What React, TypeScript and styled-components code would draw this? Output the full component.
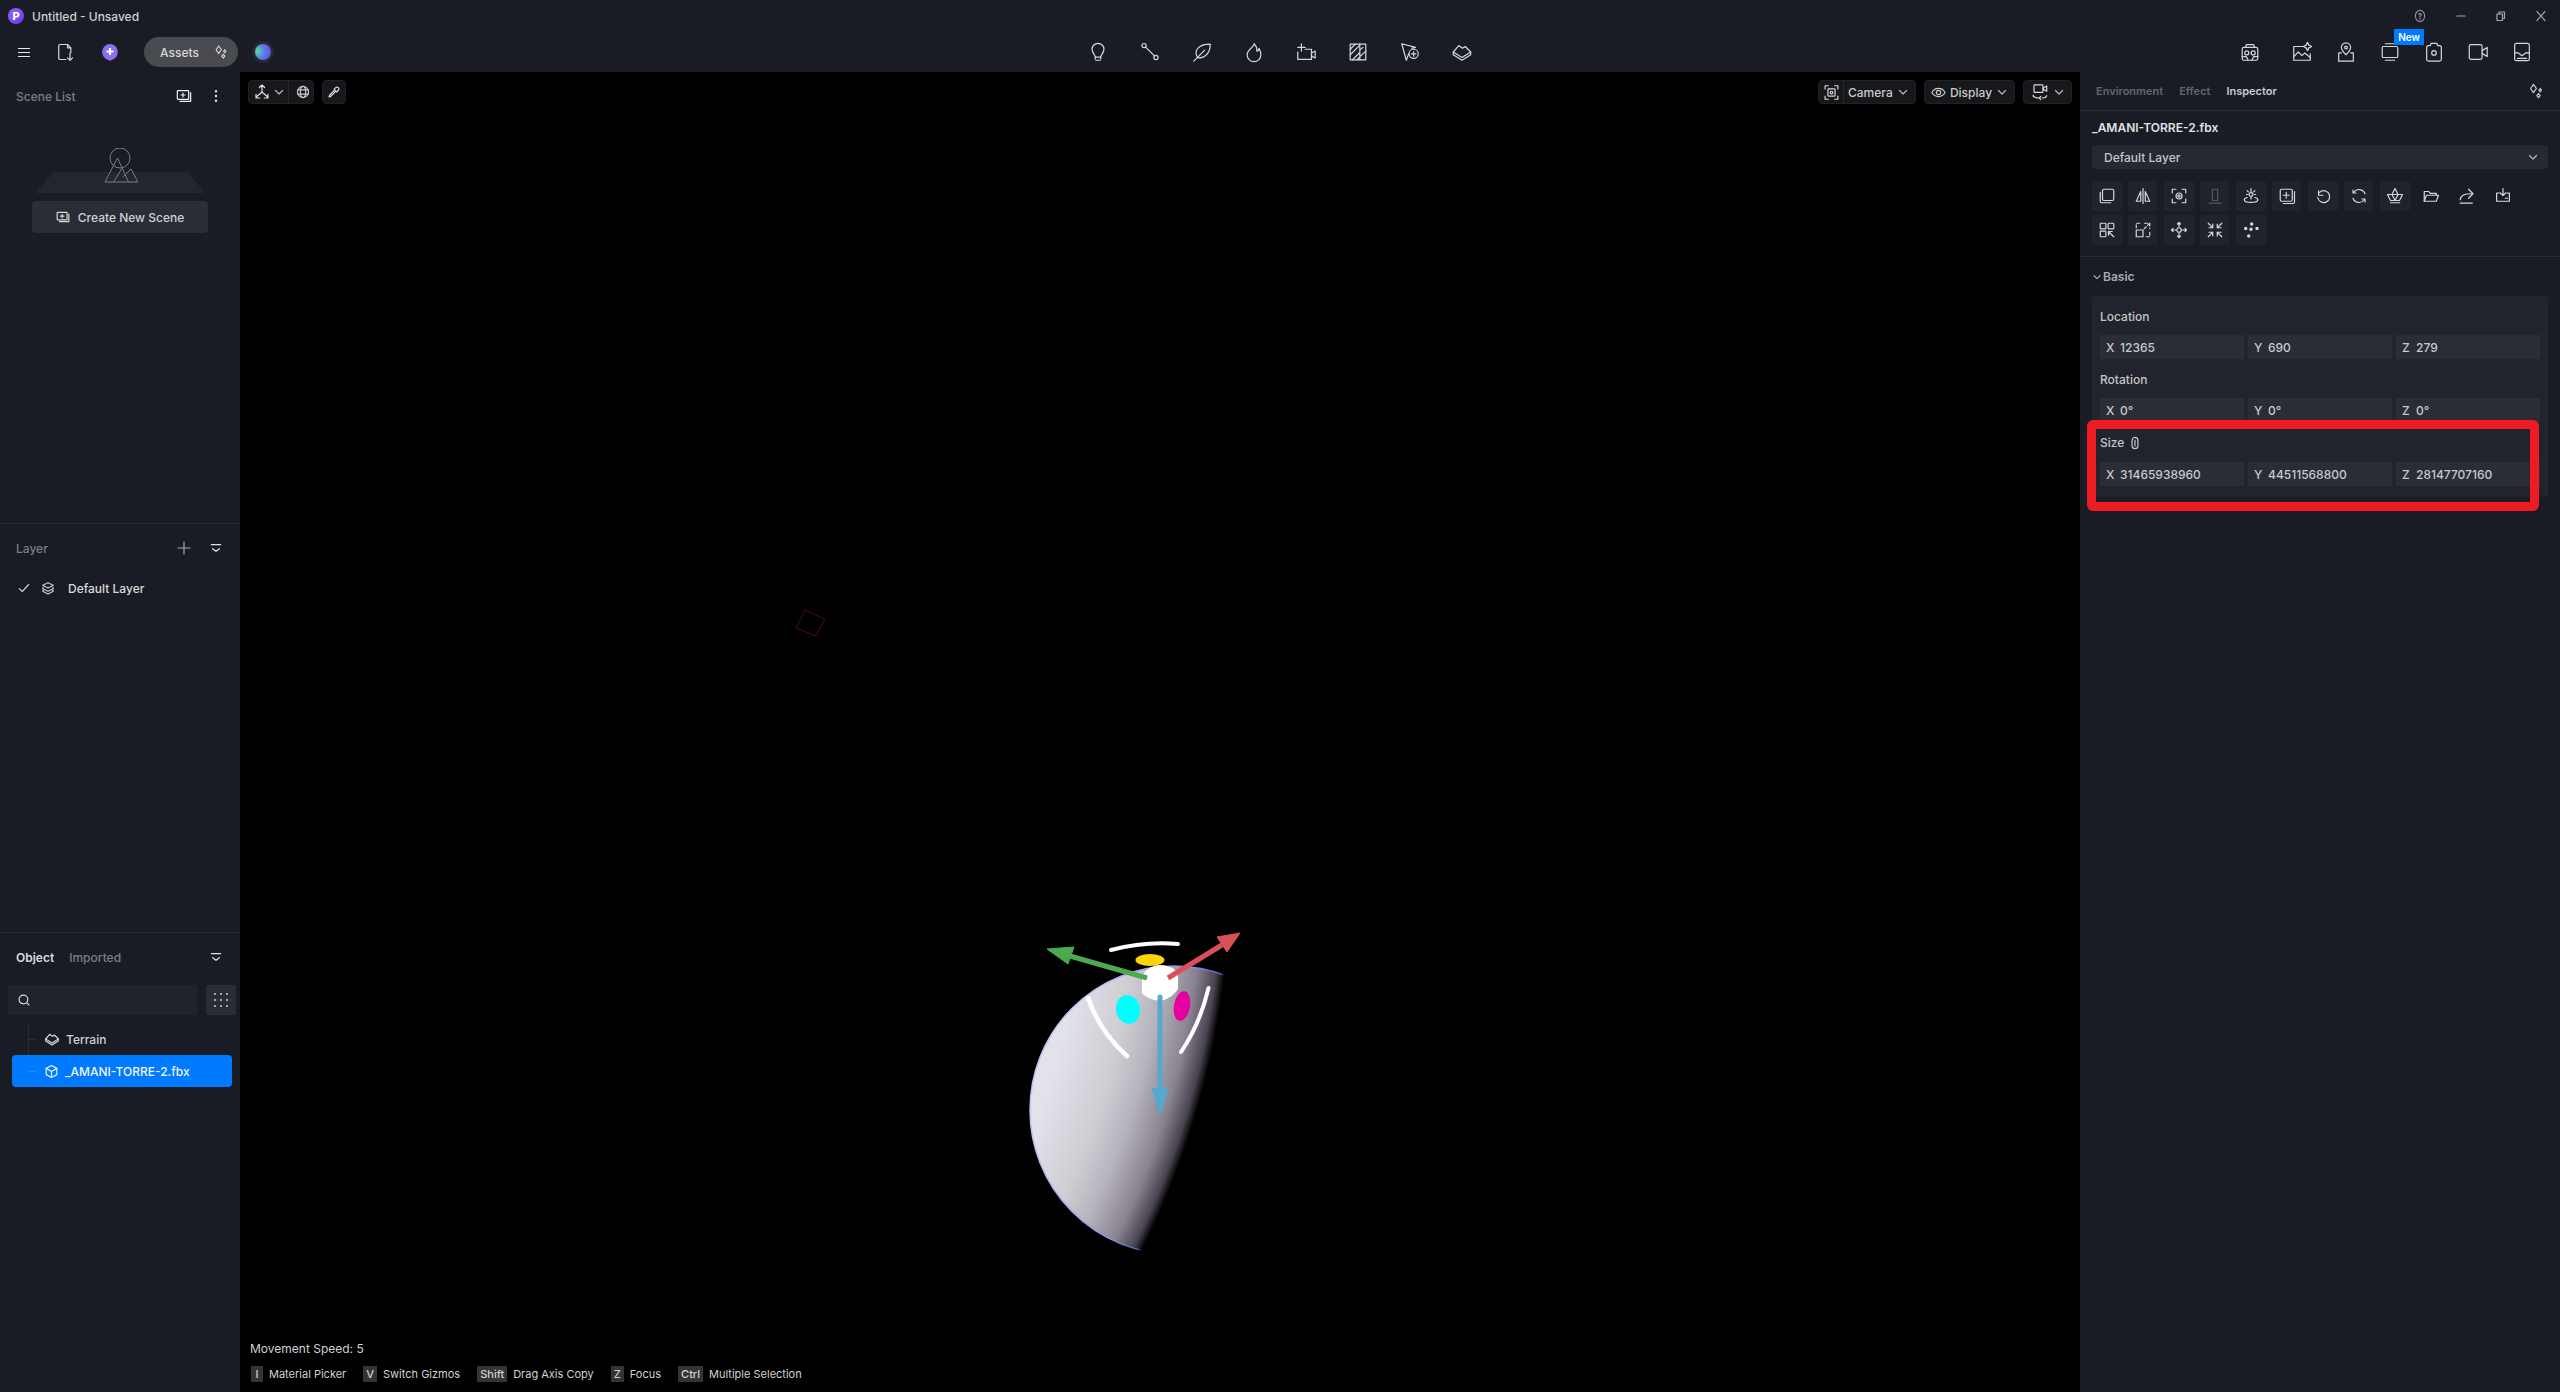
import React from 'react'
import styled, { createGlobalStyle } from 'styled-components'

const GlobalStyle = createGlobalStyle`
  html, body { margin: 0; padding: 0; background: #000; }
  body { font-family: Inter, "Liberation Sans", sans-serif; font-size: 12px; overflow: hidden; }
  * { box-sizing: border-box; }
`

const icons: Record<string, React.ReactNode> = {
  fileImport: <><path d="M15 3H6a1.500 1.500 0 0 0-1.500 1.500v15A1.500 1.500 0 0 0 6 21h7" /><path d="M15 3v4h4l-4-4M19 7v6" /><path d="M18 13v9M15 19l3 3 3-3" /></>,
  sparkles: <><path d="M9 4l3.500 5L9 14 5.500 9z" /><path d="M17 9l1.500 2-1.500 2-1.500-2zM15 15l2 2.500-2 2.500-2-2.500z" /></>,
  addScene: <><rect x="2" y="4" width="17" height="13" rx="1" /><path d="M10.500 7.500v6M7.500 10.500h6M22 7v13H6" /></>,
  dots: <><circle cx="12" cy="5" r="1" fill="currentColor" /><circle cx="12" cy="12" r="1" fill="currentColor" /><circle cx="12" cy="19" r="1" fill="currentColor" /></>,
  plus: <path d="M12 3v18M3 12h18" />,
  collapse: <><path d="M5 7h14" /><path d="M7 13l5 4 5-4" /></>,
  check: <path d="M4 13l5 5L20 6" />,
  layers: <><path d="M12 4l8 4-8 4-8-4z" /><path d="M5 11l-1 2 8 4 8-4-1-2" /><path d="M5 15l-1 2 8 4 8-4-1-2" /></>,
  search: <><circle cx="11" cy="11" r="7.500" /><path d="M17 17l3.500 3.500" /></>,
  terrain: <><path d="M2.500 12l6-7 4 3 3-2 6 6-9.500 6z" /><path d="M2.500 12v3l9.500 6 9.500-6v-3" /></>,
  cube: <><path d="M12 2.500l8.500 4.500v10L12 21.500 3.500 17V7z" /><path d="M3.500 7l8.500 5 8.500-5M12 12v9.500" /></>,
  bulb: <><path d="M9 17.500c0-2.500-3.500-4.500-3.500-8.500a6.500 6.500 0 0 1 13 0c0 4-3.500 6-3.500 8.500z" /><path d="M9.500 21h5M9 17.500v2M15 17.500v2" /></>,
  node: <><circle cx="5.500" cy="5" r="2.300" /><circle cx="18.500" cy="18" r="2.300" /><path d="M7.200 6.700l9.600 9.600" /></>,
  leaf: <><path d="M21 3.500c-9 0-15.500 3.500-15.500 10 0 2 1 3.500 2.500 5 7 0 13-5 13-15z" /><path d="M3 22L15 10" /></>,
  flame: <path d="M12 3c1 3-7.500 6-7.500 12a7.500 7.500 0 0 0 15 0c0-3-1-5-2-7-.5 2-1.500 3-2.500 3 .5-3-1-6-3-8z" />,
  videoPlus: <><path d="M11 9h7v11H3v-8" /><path d="M7 3v8M3 7h8" /><path d="M18 13l4-2v7.500l-4-2z" /></>,
  hatch: <><rect x="3.500" y="3.500" width="17" height="17" /><path d="M14 3.500v17M3.500 9L9 3.500M3.500 15L14 4.500M6 20.500l8-8M11 20.500l3-3M14 10l3.500-3M14 17l6.500-6" /></>,
  cursorPlus: <><path d="M3 3l15 4-4 1M3 3l5 18 2.500-7" /><circle cx="16" cy="14" r="5" /><path d="M16 11.500v5M13.500 14h5" /></>,
  help: <><ellipse cx="12" cy="12" rx="8" ry="9.500" /><path d="M10 9.500a2 2 0 1 1 3 2c-1 .6-1 1-1 2.500M12 16.500v1" /></>,
  minimize: <path d="M5 12h14" />,
  restore: <><rect x="4" y="8" width="11" height="13" /><path d="M8 8V4h11v13h-4" /></>,
  close: <path d="M5 4l14 16M19 4L5 20" />,
  vr: <><path d="M7 7l1-3h8l1 3" /><rect x="3.500" y="7" width="17" height="14" rx="2" /><circle cx="8.500" cy="13" r="2.200" /><circle cx="15.500" cy="13" r="2.200" /><path d="M3.500 17H8l2 4M20.500 17H16l-2 4" /></>,
  imageSpark: <><path d="M13 6H3v15h18v-7" /><path d="M3 17l5-5 4 4 3-3 6 5" /><path d="M18 1.500l1.500 3 3 1.500-3 1.500-1.500 3-1.500-3-3-1.500 3-1.500z" /></>,
  pinBox: <><path d="M12 15c-3-3-5-5-5-8a5 5 0 0 1 10 0c0 3-2 5-5 8z" /><circle cx="12" cy="7" r="1.500" /><path d="M7 13H4v9h16v-9h-3" /></>,
  monitor: <><rect x="3.500" y="6" width="17" height="12" rx="1.500" /><path d="M7 3h10M7 21h10" /></>,
  camera: <><path d="M8 5l1-2.500h6L16 5h2a2 2 0 0 1 2 2v13a2 2 0 0 1-2 2H6a2 2 0 0 1-2-2V7a2 2 0 0 1 2-2z" /><circle cx="12" cy="13" r="2.500" /></>,
  video: <><rect x="2.500" y="4" width="14" height="16" rx="2" /><path d="M16.500 10.500L22 7v10l-5.500-3.500" /></>,
  tray: <><rect x="4" y="2.500" width="16" height="19" rx="2" /><path d="M4 13h4l4 3 4-3h4M7 19h10" /></>,
  axes: <><path d="M12 12V3M8.500 6L12 2.500 15.500 6M12 12l-8 7M12 12l8 7M4 15v5h5M20 15v5h-5" /></>,
  globe: <><circle cx="12" cy="12" r="9.500" /><ellipse cx="12" cy="12" rx="4.500" ry="9.500" /><path d="M3 8.500h18M3 15.500h18" /></>,
  picker: <><path d="M15 4.500a3 3 0 0 1 4.500 4.500l-3 3-4.500-4.500z" /><path d="M13 9l-8.500 8.500-1 3 3-1L15 11" /></>,
  focus: <><path d="M3 7V2.500h4.500M16.500 2.500H21V7M21 17v4.500h-4.500M7.500 21.500H3V17" /><rect x="7" y="7" width="10" height="10" rx="1" /><circle cx="12" cy="12" r="1.800" /></>,
  focusRing: <><path d="M3 8V3h5M16 3h5v5M21 16v5h-5M8 21H3v-5" /><circle cx="12" cy="12" r="4" /><circle cx="12" cy="12" r="1.500" /></>,
  eye: <><path d="M1.500 12C4 7.500 8 5.500 12 5.500s8 2 10.500 6.500c-2.500 4.500-6.500 6.500-10.500 6.500S4 16.500 1.500 12z" /><circle cx="12" cy="12" r="3.500" /></>,
  orbit: <><rect x="4" y="2.500" width="12" height="10" rx="1" /><path d="M16 7l5-3v7l-5-3zM3 17c1 2 4 3 8 3M21 17c-1 2-3 3-6 3M13 18l-2 2 2 2M3 16l0 2" /></>,
  copy: <><rect x="6" y="3" width="15" height="15" rx="2" /><path d="M3 7v12a2 2 0 0 0 2 2h12" /></>,
  mirror: <><path d="M12 2v20M9 6L3 19h6zM15 6l6 13h-6z" /></>,
  pedestal: <><rect x="8.500" y="3" width="7" height="15" /><path d="M4 21.500h16" /></>,
  anchor: <><circle cx="12" cy="10" r="2.500" /><path d="M12 2v5.500M12 12.500V16M6 10h2M16 10h2M7 5l1.500 1.500M17 5l-1.500 1.500" /><path d="M7 14c-2.500.5-4 1.500-4 3 0 2 4 3.500 9 3.500s9-1.500 9-3.500c0-1.500-1.500-2.500-4-3" /></>,
  addCopy: <><rect x="3" y="3" width="16" height="16" rx="2" /><path d="M11 7v8M7 11h8M22 6v14a2 2 0 0 1-2 2H7" /></>,
  undo: <><path d="M6 5v6h6" /><path d="M6.500 8a8 8 0 1 1-1.500 6" /></>,
  sync: <><path d="M20 9a8.500 8.500 0 0 0-15-2M4 4v4h4M4 15a8.500 8.500 0 0 0 15 2M20 20v-4h-4" /></>,
  crystal: <><path d="M12 2l4 8h6l-4 8H6L2 10h6zM8 10h8M8 10l4 8 4-8M6 21h12" /></>,
  folder: <><path d="M3 19V6h6l2 2.500h8V11" /><path d="M3 19l3-8h16l-3 8z" /></>,
  share: <><path d="M3 17c1-6 5-8 16-8" /><path d="M14 3l6 6-6 6M3 21.500h16" /></>,
  download: <><path d="M12 2v9M8.500 8l3.500 3.500L15.500 8M7 8H3.500v11h17V8H17" /><path d="M15 15h3" /></>,
  qrArrow: <><rect x="3" y="3" width="7.500" height="7.500" rx="1" /><rect x="13.500" y="3" width="7.500" height="7.500" rx="1" /><rect x="3" y="13.500" width="7.500" height="7.500" rx="1" /><path d="M14 14l7 7M14 14v5M14 14h5" /></>,
  resize: <><rect x="3" y="12" width="9" height="9" /><path d="M14 3h7v7M21 3l-8 8M3 9V3h6M21 15v6h-5" strokeDasharray="3 2" /></>,
  move: <><circle cx="12" cy="12" r="3" /><path d="M12 2v6M12 16v6M2 12h6M16 12h6M10 4l2-2 2 2M10 20l2 2 2-2M4 10l-2 2 2 2M20 10l2 2-2 2" /></>,
  shrink: <><path d="M3 3l6 6M9 4v5H4M21 3l-6 6M15 4v5h5M3 21l6-6M9 20v-5H4M21 21l-6-6M15 20v-5h5" /></>,
  scatter: <><circle cx="5" cy="10" r="1.500" fill="currentColor" /><circle cx="13" cy="4" r="1.500" fill="currentColor" /><circle cx="12" cy="11" r="1.500" fill="currentColor" /><circle cx="20" cy="10" r="1.500" fill="currentColor" /><circle cx="9" cy="20" r="1.500" fill="currentColor" /></>,
  link: <><rect x="7" y="2.500" width="10" height="19" rx="5" /><path d="M12 7v10" /></>,
  chevron: <path d="M5 9l7 7 7-7" />,
}

const Svg = styled.svg<{ $c?: string }>`
  display: block;
  flex: none;
  fill: none;
  stroke: currentColor;
  stroke-width: 1.2;
  stroke-linecap: round;
  stroke-linejoin: round;
  color: ${p => p.$c || '#d9dadc'};
  & * { vector-effect: non-scaling-stroke; }
`

const Icon: React.FC<{ name: string; size?: number; color?: string }> = ({ name, size = 18, color }) => (
  <Svg viewBox="0 0 24 24" width={size} height={size} $c={color}>{icons[name]}</Svg>
)

const Page = styled.div`
  width: 2560px;
  height: 1392px;
  display: flex;
  flex-direction: column;
  background: #1a1c25;
  color: #d8d9db;
`

const TopBar = styled.header`
  height: 72px;
  flex: none;
  display: flex;
  flex-direction: column;
`

const TitleRow = styled.div`
  height: 32px;
  display: flex;
  align-items: center;
  padding-left: 8px;
  gap: 8px;
  color: #cfd0d3;
  font-weight: 500;
`

const WindowControls = styled.div`
  margin-left: auto;
  margin-right: 12px;
  display: flex;
  align-items: center;
  gap: 27px;
`

const ToolRow = styled.div`
  height: 40px;
  position: relative;
  display: grid;
  grid-template-columns: 1fr auto 1fr;
  align-items: center;
`

const ToolGroup = styled.div<{ $end?: boolean; $gap: number; $pad?: number }>`
  display: flex;
  align-items: center;
  gap: ${p => p.$gap}px;
  justify-content: ${p => (p.$end ? 'flex-end' : 'flex-start')};
  padding: 0 ${p => p.$pad ?? 0}px;
`

const MenuLines = styled.span`
  width: 12px;
  height: 9px;
  margin: 0 0 0 18px;
  border-top: 1px solid #e4e4e6;
  border-bottom: 1px solid #e4e4e6;
  position: relative;
  &::after {
    content: '';
    position: absolute;
    left: 0;
    right: 0;
    top: 3px;
    border-top: 1px solid #e4e4e6;
  }
`

const FileButton = styled.span`
  margin-left: 25px;
`

const BubbleSvg = styled.svg`
  margin-left: 26px;
`

const AssetsPill = styled.div`
  width: 94px;
  height: 30px;
  margin-left: 25px;
  border-radius: 15px;
  background: #494b51;
  display: flex;
  align-items: center;
  justify-content: space-between;
  padding: 0 8px 0 16px;
  font-weight: 500;
  color: #d6d7d8;
`

const OrbRing = styled.span`
  width: 22px;
  height: 22px;
  margin-left: 14px;
  border-radius: 50%;
  background: #262833;
  display: grid;
  place-items: center;
`

const Orb = styled.span`
  width: 16px;
  height: 16px;
  border-radius: 50%;
  background: radial-gradient(circle at 15% 45%, #58e0a0 0, #5c7ce8 45%, #6d3fe8 100%);
`

const RightTool = styled.span<{ $wide?: boolean }>`
  position: relative;
  margin-right: ${p => (p.$wide ? 8 : 0)}px;
`

const NewBadge = styled.span`
  position: absolute;
  left: 15px;
  top: -12px;
  width: 30px;
  height: 16px;
  background: #007aff;
  color: #fff;
  font-size: 10px;
  font-weight: 600;
  line-height: 16px;
  text-align: center;
`

const Main = styled.div`
  flex: 1;
  display: flex;
  min-height: 0;
`

const LeftPanel = styled.aside`
  width: 240px;
  flex: none;
  display: flex;
  flex-direction: column;
`

const Section = styled.section<{ $h?: number }>`
  height: ${p => (p.$h ? `${p.$h}px` : 'auto')};
  flex: ${p => (p.$h ? 'none' : 1)};
  border-bottom: ${p => (p.$h ? '1px solid #2b2d35' : 'none')};
  display: flex;
  flex-direction: column;
`

const SectionHead = styled.div`
  height: 48px;
  flex: none;
  display: flex;
  align-items: center;
  padding: 0 16px;
  gap: 16px;
  color: #7c7e84;
  font-weight: 500;
`

const HeadTitle = styled.span<{ $on?: boolean }>`
  color: ${p => (p.$on ? '#d8d9db' : '#7c7e84')};
  font-weight: ${p => (p.$on ? 600 : 500)};
`

const HeadTabs = styled.div`
  display: flex;
  gap: 15px;
  margin-right: auto;
`

const HeadIcons = styled.div`
  margin-left: auto;
  display: flex;
  align-items: center;
  gap: 16px;
`

const EmptyArt = styled.div`
  position: relative;
  height: 45px;
  margin-top: 28px;
  display: flex;
  justify-content: center;
`

const Plinth = styled.div`
  position: absolute;
  left: 35px;
  top: 24px;
  width: 170px;
  height: 21px;
  background: #24262e;
  clip-path: polygon(11% 0, 90% 0, 100% 100%, 0 100%);
`

const EmptySvg = styled.svg`
  position: relative;
  fill: none;
  stroke: #7a7c82;
  stroke-width: 1;
`

const CreateButton = styled.button`
  width: 176px;
  height: 32px;
  margin: 8px 0 0 32px;
  padding: 0;
  border: 0;
  border-radius: 4px;
  background: #2a2d35;
  color: #cfd0d3;
  font: 500 12px Inter, sans-serif;
  display: flex;
  align-items: center;
  justify-content: center;
  gap: 8px;
`

const LayerRow = styled.div`
  height: 32px;
  padding-left: 17px;
  display: flex;
  align-items: center;
  font-weight: 500;
  color: #d8d9db;
`

const LayerName = styled.span`
  margin-left: 12px;
`

const LayerIcon = styled.span`
  margin-left: 9px;
`

const SearchRow = styled.div`
  display: flex;
  gap: 8px;
  padding: 4px 4px 0 8px;
`

const SearchBox = styled.div`
  width: 190px;
  height: 30px;
  background: #20232b;
  border-radius: 2px;
  display: flex;
  align-items: center;
  padding-left: 9px;
`

const GridButton = styled.div`
  width: 30px;
  height: 30px;
  border-radius: 2px;
  background: #292c33;
  display: grid;
  grid-template-columns: repeat(3, 2px);
  grid-auto-rows: 2px;
  gap: 4px;
  place-content: center;
  span { background: #c9cacd; border-radius: 50%; }
`

const Tree = styled.div`
  margin-top: 8px;
  padding: 0 8px 0 12px;
  position: relative;
  &::before {
    content: '';
    position: absolute;
    left: 28px;
    top: 0;
    height: 64px;
    border-left: 1px solid #2b2d35;
  }
`

const TreeRow = styled.div<{ $sel?: boolean }>`
  height: 32px;
  border-radius: 4px;
  position: relative;
  display: flex;
  align-items: center;
  gap: 6px;
  padding-left: 32px;
  font-weight: 500;
  background: ${p => (p.$sel ? '#007aff' : 'transparent')};
  color: ${p => (p.$sel ? '#f2f5fa' : '#d0d1d3')};
  &::before {
    content: '';
    position: absolute;
    left: 17px;
    width: 6px;
    border-top: 1px solid ${p => (p.$sel ? '#2a8fff' : '#2b2d35')};
  }
`

const Viewport = styled.main`
  flex: 1;
  position: relative;
  background: #000;
  display: flex;
  flex-direction: column;
  padding: 8px;
  overflow: hidden;
`

const ViewBar = styled.div`
  display: flex;
  gap: 8px;
  position: relative;
`

const ViewTool = styled.div<{ $w: number; $push?: boolean }>`
  width: ${p => p.$w}px;
  height: 24px;
  margin-left: ${p => (p.$push ? 'auto' : 0)};
  background: #17181c;
  border: 1px solid #202227;
  border-radius: 4px;
  display: flex;
  align-items: center;
  color: #c9cacd;
  font-weight: 500;
  gap: 4px;
`

const ViewCell = styled.span<{ $w?: number; $line?: boolean; $gap?: number; $start?: boolean }>`
  width: ${p => (p.$w ? `${p.$w}px` : 'auto')};
  height: 100%;
  display: flex;
  align-items: center;
  justify-content: ${p => (p.$start ? 'flex-start' : 'center')};
  gap: ${p => p.$gap ?? 4}px;
  border-right: ${p => (p.$line ? '1px solid #26282d' : 'none')};
`

const Gizmo = styled.svg`
  position: absolute;
  left: 750px;
  top: 838px;
`

const Marker = styled.svg`
  position: absolute;
  left: 550px;
  top: 530px;
`

const Hints = styled.div`
  margin-top: auto;
  margin-left: 2px;
  position: relative;
  padding-bottom: 2px;
  color: #d0d1d3;
`

const SpeedLine = styled.div`
  font-size: 12px;
  line-height: 16px;
  margin-bottom: 9px;
`

const KeyRow = styled.div`
  display: flex;
  align-items: center;
  gap: 17px;
  padding-left: 1px;
  font-size: 11px;
`

const KeyHint = styled.span`
  display: flex;
  align-items: center;
  gap: 6px;
`

const Key = styled.kbd`
  min-width: 12px;
  height: 16px;
  padding: 0 3px;
  background: #333436;
  font: 500 11px/16px Inter, sans-serif;
  text-align: center;
`

const RightPanel = styled.aside`
  width: 480px;
  flex: none;
  position: relative;
  display: flex;
  flex-direction: column;
`

const TabRow = styled.div`
  height: 39px;
  flex: none;
  border-bottom: 1px solid #2b2d35;
  display: flex;
  align-items: center;
  gap: 16px;
  padding: 0 14px 0 16px;
  font-size: 11px;
  font-weight: 600;
`

const Tab = styled.span<{ $on?: boolean }>`
  color: ${p => (p.$on ? '#c9cacd' : '#63656c')};
`

const TabSpark = styled.span`
  margin-left: auto;
`

const ObjectBlock = styled.div`
  padding: 9px 12px 12px;
  height: 146px;
  flex: none;
  border-bottom: 1px solid #2b2d35;
`

const FileName = styled.div`
  line-height: 16px;
  font-weight: 600;
  color: #e0e1e3;
`

const SelectBox = styled.div`
  height: 24px;
  margin-top: 9px;
  border-radius: 4px;
  background: #262932;
  display: flex;
  align-items: center;
  justify-content: space-between;
  padding: 0 9px 0 12px;
  font-weight: 500;
  color: #c4c5c9;
`

const ToolGrid = styled.div`
  margin-top: 12px;
  display: grid;
  grid-template-columns: repeat(12, 30px);
  grid-auto-rows: 30px;
  column-gap: 6px;
  row-gap: 4px;
`

const ToolCell = styled.div<{ $bare?: boolean }>`
  border-radius: 2px;
  background: ${p => (p.$bare ? 'transparent' : '#20232b')};
  display: grid;
  place-items: center;
`

const BasicBlock = styled.div`
  padding: 0 12px;
`

const BasicHead = styled.div`
  height: 39px;
  display: flex;
  align-items: center;
  gap: 1px;
  font-weight: 600;
  color: #a9aaae;
`

const Card = styled.div`
  height: 201px;
  border-radius: 4px;
  background: #21242c;
  padding: 0 8px;
`

const FieldLabel = styled.div<{ $tall?: boolean }>`
  height: ${p => (p.$tall ? 40 : 39)}px;
  padding-top: 1px;
  display: flex;
  align-items: center;
  gap: 4px;
  font-weight: 500;
  color: #c4c5c9;
`

const FieldRow = styled.div`
  display: grid;
  grid-template-columns: repeat(3, 144px);
  gap: 4px;
`

const Field = styled.div`
  height: 24px;
  background: #2a2d35;
  display: flex;
  align-items: center;
  padding-left: 6px;
  gap: 6px;
  font-weight: 500;
  color: #c8c9cc;
  b { font-weight: 500; width: 8px; }
`

const RedBox = styled.div`
  position: absolute;
  left: 7px;
  top: 348px;
  width: 452px;
  height: 91px;
  border: 9px solid #ed1c24;
  border-radius: 6px;
  pointer-events: none;
`

const center = ['bulb', 'node', 'leaf', 'flame', 'videoPlus', 'hatch', 'cursorPlus', 'terrain']
const rightTools = ['vr', 'imageSpark', 'pinBox', 'monitor', 'camera', 'video', 'tray']
const inspectorTools = ['copy', 'mirror', 'focusRing', 'pedestal', 'anchor', 'addCopy', 'undo', 'sync', 'crystal', 'folder', 'share', 'download', 'qrArrow', 'resize', 'move', 'shrink', 'scatter']
const bareTools = ['folder', 'share', 'download']

const fields = [
  { label: 'Location', x: '12365', y: '690', z: '279' },
  { label: 'Rotation', x: '0°', y: '0°', z: '0°' },
  { label: 'Size', x: '31465938960', y: '44511568800', z: '28147707160', linked: true },
]

const hints = [
  ['I', 'Material Picker'],
  ['V', 'Switch Gizmos'],
  ['Shift', 'Drag Axis Copy'],
  ['Z', 'Focus'],
  ['Ctrl', 'Multiple Selection'],
]

const App: React.FC = () => (
  <Page>
    <GlobalStyle />
    <TopBar>
      <TitleRow>
        <svg width="16" height="16" viewBox="0 0 16 16">
          <defs>
            <linearGradient id="logo" x1="0" y1="0" x2="1" y2="1">
              <stop offset="0" stopColor="#8f6cf5" />
              <stop offset="1" stopColor="#6a35e8" />
            </linearGradient>
          </defs>
          <circle cx="8" cy="8" r="8" fill="url(#logo)" />
          <text x="8" y="12" textAnchor="middle" fontSize="11" fontWeight="800" fontFamily="Inter" fill="#fff">P</text>
        </svg>
        Untitled - Unsaved
        <WindowControls>
          <Icon name="help" size={14} color="#8c8e93" />
          <Icon name="minimize" size={14} color="#a5a6aa" />
          <Icon name="restore" size={12} color="#a5a6aa" />
          <Icon name="close" size={14} color="#a5a6aa" />
        </WindowControls>
      </TitleRow>
      <ToolRow>
        <ToolGroup $gap={0}>
          <MenuLines />
          <FileButton><Icon name="fileImport" size={20} color="#d6d7d9" /></FileButton>
          <BubbleSvg width="18" height="18" viewBox="0 0 18 18">
            <path d="M9 1a8 8 0 0 1 2 15.700L9 18l-2-1.300A8 8 0 0 1 9 1z" fill="#8d6df2" />
            <path d="M9 5v7M5.500 8.500h7" stroke="#fff" strokeWidth="2" />
          </BubbleSvg>
          <AssetsPill>
            Assets
            <Icon name="sparkles" size={18} color="#d6d7d9" />
          </AssetsPill>
          <OrbRing><Orb /></OrbRing>
        </ToolGroup>
        <ToolGroup $gap={30}>
          {center.map(n => <Icon key={n} name={n} size={22} color="#d6d7d9" />)}
        </ToolGroup>
        <ToolGroup $end $gap={22} $pad={27}>
          {rightTools.map(n => (
            <RightTool key={n} $wide={n === 'vr'}>
              <Icon name={n} size={22} color="#d6d7d9" />
              {n === 'monitor' && <NewBadge>New</NewBadge>}
            </RightTool>
          ))}
        </ToolGroup>
      </ToolRow>
    </TopBar>
    <Main>
      <LeftPanel>
        <Section $h={452}>
          <SectionHead>
            Scene List
            <HeadIcons>
              <Icon name="addScene" size={16} color="#f0f0f2" />
              <Icon name="dots" size={16} color="#e4e4e6" />
            </HeadIcons>
          </SectionHead>
          <EmptyArt>
            <Plinth />
            <EmptySvg width="36" height="36" viewBox="0 0 36 36">
              <circle cx="18" cy="10" r="10" />
              <path d="M3 34L15.500 10L26.500 34M11.500 34L19.500 21M21 29L29 21L36 34M3 34H36" />
            </EmptySvg>
          </EmptyArt>
          <CreateButton>
            <Icon name="addScene" size={14} color="#d6d7d9" />
            Create New Scene
          </CreateButton>
        </Section>
        <Section $h={409}>
          <SectionHead>
            Layer
            <HeadIcons>
              <Icon name="plus" size={16} color="#a5a6aa" />
              <Icon name="collapse" size={16} color="#e4e4e6" />
            </HeadIcons>
          </SectionHead>
          <LayerRow>
            <Icon name="check" size={14} color="#c9cacd" />
            <LayerIcon><Icon name="layers" size={16} color="#c9cacd" /></LayerIcon>
            <LayerName>Default Layer</LayerName>
          </LayerRow>
        </Section>
        <Section>
          <SectionHead>
            <HeadTabs>
              <HeadTitle $on>Object</HeadTitle>
              <HeadTitle>Imported</HeadTitle>
            </HeadTabs>
            <Icon name="collapse" size={16} color="#e4e4e6" />
          </SectionHead>
          <SearchRow>
            <SearchBox><Icon name="search" size={14} color="#d6d7d9" /></SearchBox>
            <GridButton>{Array.from({ length: 9 }, (_, i) => <span key={i} />)}</GridButton>
          </SearchRow>
          <Tree>
            <TreeRow><Icon name="terrain" size={16} color="#d6d7d9" />Terrain</TreeRow>
            <TreeRow $sel><Icon name="cube" size={15} color="#e8f2ff" />_AMANI-TORRE-2.fbx</TreeRow>
          </Tree>
        </Section>
      </LeftPanel>
      <Viewport>
        <Marker width="40" height="40" viewBox="0 0 40 40">
          <path d="M15 8l20 9-9 17-20-8z" fill="none" stroke="#4f0a14" strokeWidth="1" />
        </Marker>
        <Gizmo width="300" height="350" viewBox="0 0 300 350">
          <defs>
            <radialGradient id="ball" gradientUnits="userSpaceOnUse" cx="-583" cy="-30" r="823">
              <stop offset="0.818" stopColor="#e2e2ea" />
              <stop offset="0.887" stopColor="#cecdd4" />
              <stop offset="0.925" stopColor="#b5b3bb" />
              <stop offset="0.965" stopColor="#8a8290" />
              <stop offset="0.989" stopColor="#4a4450" />
              <stop offset="1" stopColor="#000" />
            </radialGradient>
            <radialGradient id="rim" gradientUnits="userSpaceOnUse" cx="-583" cy="-30" r="823">
              <stop offset="0.818" stopColor="#bcc5f0" />
              <stop offset="0.96" stopColor="#8592e6" />
              <stop offset="0.995" stopColor="#5560c0" />
              <stop offset="1" stopColor="#000" />
            </radialGradient>
          </defs>
          <circle cx="184" cy="200" r="144" fill="url(#ball)" stroke="url(#rim)" strokeWidth="1.500" />
          <path d="M121 40Q155 31 188 34" fill="none" stroke="#fff" strokeWidth="4" strokeLinecap="round" />
          <path d="M98 88Q110 122 137 146" fill="none" stroke="#fff" strokeWidth="4.500" strokeLinecap="round" />
          <path d="M218.500 78Q210 114 191 142" fill="none" stroke="#fff" strokeWidth="4" strokeLinecap="round" />
          <ellipse cx="160" cy="50" rx="14.500" ry="6" fill="#ffd400" />
          <ellipse cx="138" cy="99.500" rx="12" ry="14.500" transform="rotate(-12 138 99.500)" fill="#00ffff" />
          <ellipse cx="192" cy="96" rx="8" ry="15" transform="rotate(10 192 96)" fill="#e6009f" />
          <path d="M170 55c10 0 18 5 18 11v13c-4 6-11 11-18 12-8-1-15-4-18-8V67c2-6 9-12 18-12z" fill="#fff" />
          <path d="M157 68L80 46" stroke="#4ea850" strokeWidth="5" />
          <path d="M57 39L84 37L78 54z" fill="#4ea850" stroke="#4ea850" strokeLinejoin="round" />
          <path d="M178 68L232 35" stroke="#d9505a" strokeWidth="5" />
          <path d="M250 23L227 27L237 42z" fill="#d9505a" stroke="#d9505a" strokeLinejoin="round" />
          <path d="M170 87V180" stroke="#56a8cc" strokeWidth="5" strokeLinecap="round" />
          <path d="M161.500 178H179L170 206z" fill="#56a8cc" />
        </Gizmo>
        <ViewBar>
          <ViewTool $w={66}>
            <ViewCell $w={41} $line $gap={2}>
              <Icon name="axes" size={18} color="#e0e1e3" />
              <Icon name="chevron" size={12} color="#b5b6ba" />
            </ViewCell>
            <ViewCell $w={20}><Icon name="globe" size={14} color="#c9cacd" /></ViewCell>
          </ViewTool>
          <ViewTool $w={24}>
            <ViewCell $w={22}><Icon name="picker" size={14} color="#d6d7d9" /></ViewCell>
          </ViewTool>
          <ViewTool $w={98} $push>
            <ViewCell $w={25} $line><Icon name="focus" size={17} color="#d6d7d9" /></ViewCell>
            <ViewCell $start>Camera<Icon name="chevron" size={12} color="#b5b6ba" /></ViewCell>
          </ViewTool>
          <ViewTool $w={91}>
            <ViewCell $w={89}><Icon name="eye" size={15} color="#c9cacd" />Display<Icon name="chevron" size={12} color="#b5b6ba" /></ViewCell>
          </ViewTool>
          <ViewTool $w={49}>
            <ViewCell $w={47}><Icon name="orbit" size={18} color="#d6d7d9" /><Icon name="chevron" size={12} color="#b5b6ba" /></ViewCell>
          </ViewTool>
        </ViewBar>
        <Hints>
          <SpeedLine>Movement Speed: 5</SpeedLine>
          <KeyRow>
            {hints.map(([k, t]) => (
              <KeyHint key={k}><Key>{k}</Key>{t}</KeyHint>
            ))}
          </KeyRow>
        </Hints>
      </Viewport>
      <RightPanel>
        <TabRow>
          <Tab>Environment</Tab>
          <Tab>Effect</Tab>
          <Tab $on>Inspector</Tab>
          <TabSpark><Icon name="sparkles" size={20} color="#c9cacd" /></TabSpark>
        </TabRow>
        <ObjectBlock>
          <FileName>_AMANI-TORRE-2.fbx</FileName>
          <SelectBox>
            Default Layer
            <Icon name="chevron" size={12} color="#b5b6ba" />
          </SelectBox>
          <ToolGrid>
            {inspectorTools.map(n => (
              <ToolCell key={n} $bare={bareTools.includes(n)}>
                <Icon name={n} size={18} color={n === 'pedestal' ? '#55575d' : '#d6d7d9'} />
              </ToolCell>
            ))}
          </ToolGrid>
        </ObjectBlock>
        <BasicBlock>
          <BasicHead>
            <Icon name="chevron" size={10} color="#a5a6aa" />
            Basic
          </BasicHead>
          <Card>
            {fields.map(f => (
              <React.Fragment key={f.label}>
                <FieldLabel $tall={f.linked}>
                  {f.label}
                  {f.linked && <Icon name="link" size={14} color="#c9cacd" />}
                </FieldLabel>
                <FieldRow>
                  <Field><b>X</b>{f.x}</Field>
                  <Field><b>Y</b>{f.y}</Field>
                  <Field><b>Z</b>{f.z}</Field>
                </FieldRow>
              </React.Fragment>
            ))}
          </Card>
        </BasicBlock>
        <RedBox />
      </RightPanel>
    </Main>
  </Page>
)

export default App
